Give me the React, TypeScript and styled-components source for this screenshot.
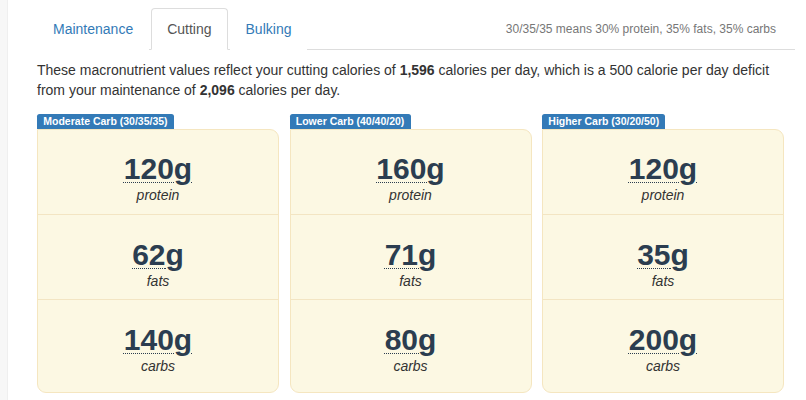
import React from "react";
import styled, { createGlobalStyle } from "styled-components";

const Global = createGlobalStyle`
  html, body { margin: 0; padding: 0; background: #ffffff; }
  body { font-family: "Liberation Sans", Arial, sans-serif; font-size: 14px; line-height: 20px; color: #333333; }
  * { box-sizing: border-box; }
`;

const Page = styled.div`
  display: flex;
  width: 806px;
  height: 400px;
  overflow: hidden;
`;

const Gutter = styled.div`
  width: 8px;
  flex: none;
  background: #f7f7f7;
  border-right: 1px solid #efefef;
`;

const Main = styled.main`
  flex: 1;
  padding: 8px 11px 0 29px;
  background: #ffffff;
`;

const Tabs = styled.ul`
  display: flex;
  align-items: flex-end;
  list-style: none;
  margin: 0;
  padding: 0;
  border-bottom: 1px solid #dddddd;
`;

const Tab = styled.li<{ $active?: boolean }>`
  margin: 0 2px -1px 0;
  padding: 10px 15px;
  line-height: 20px;
  border: 1px solid ${(p) => (p.$active ? "#dddddd" : "transparent")};
  border-bottom-color: ${(p) => (p.$active ? "#ffffff" : "transparent")};
  border-radius: 4px 4px 0 0;
  background: #ffffff;
  color: ${(p) => (p.$active ? "#555555" : "#337ab7")};
  cursor: pointer;
`;

const Hint = styled.li`
  margin-left: auto;
  padding: 10px 19px 10px 0;
  align-self: center;
  font-size: 12px;
  line-height: 20px;
  color: #777777;
`;

const Intro = styled.p`
  margin: 11px 0 13.5px;
  line-height: 19.5px;
`;

const Grid = styled.div`
  display: grid;
  grid-template-columns: repeat(3, 242px);
  column-gap: 10.5px;
`;

const Column = styled.div`
  display: flex;
  flex-direction: column;
  align-items: flex-start;
`;

const Label = styled.span`
  display: inline-block;
  background: #337ab7;
  color: #ffffff;
  font-weight: bold;
  font-size: 10.5px;
  line-height: 1;
  padding: 2.1px 6.3px 3.2px;
  border-radius: 2.6px 2.6px 0 0;
  white-space: nowrap;
`;

const Card = styled.div`
  align-self: stretch;
  background: #fcf8e3;
  border: 1px solid #f5e6c0;
  border-radius: 0 9px 9px 9px;
  padding-bottom: 8px;
`;

const Section = styled.div<{ $first?: boolean }>`
  height: ${(p) => (p.$first ? 84 : 85)}px;
  padding-top: ${(p) => (p.$first ? 22 : 23)}px;
  text-align: center;
  border-top: ${(p) => (p.$first ? "none" : "1px solid #f3e5c3")};
`;

const Amount = styled.abbr`
  display: inline-block;
  font-size: 30px;
  font-weight: bold;
  line-height: 33px;
  color: #2b3d50;
  text-decoration: underline dotted;
  text-decoration-thickness: 1px;
  text-underline-offset: 3px;
  cursor: help;
`;

const Name = styled.div`
  font-style: italic;
  font-size: 14px;
  line-height: 20px;
  color: #333333;
`;

const plans = [
  { title: "Moderate Carb (30/35/35)", protein: 120, fats: 62, carbs: 140 },
  { title: "Lower Carb (40/40/20)", protein: 160, fats: 71, carbs: 80 },
  { title: "Higher Carb (30/20/50)", protein: 120, fats: 35, carbs: 200 },
];

export default function App() {
  return (
    <>
      <Global />
      <Page>
        <Gutter />
        <Main>
          <Tabs>
            <Tab>Maintenance</Tab>
            <Tab $active>Cutting</Tab>
            <Tab>Bulking</Tab>
            <Hint>30/35/35 means 30% protein, 35% fats, 35% carbs</Hint>
          </Tabs>
          <Intro>
            These macronutrient values reflect your cutting calories of <b>1,596</b> calories per day, which is a 500
            calorie per day deficit from your maintenance of <b>2,096</b> calories per day.
          </Intro>
          <Grid>
            {plans.map((p) => (
              <Column key={p.title}>
                <Label>{p.title}</Label>
                <Card>
                  <Section $first>
                    <Amount title={`${p.protein} grams of protein`}>{p.protein}g</Amount>
                    <Name>protein</Name>
                  </Section>
                  <Section>
                    <Amount title={`${p.fats} grams of fats`}>{p.fats}g</Amount>
                    <Name>fats</Name>
                  </Section>
                  <Section>
                    <Amount title={`${p.carbs} grams of carbs`}>{p.carbs}g</Amount>
                    <Name>carbs</Name>
                  </Section>
                </Card>
              </Column>
            ))}
          </Grid>
        </Main>
      </Page>
    </>
  );
}
